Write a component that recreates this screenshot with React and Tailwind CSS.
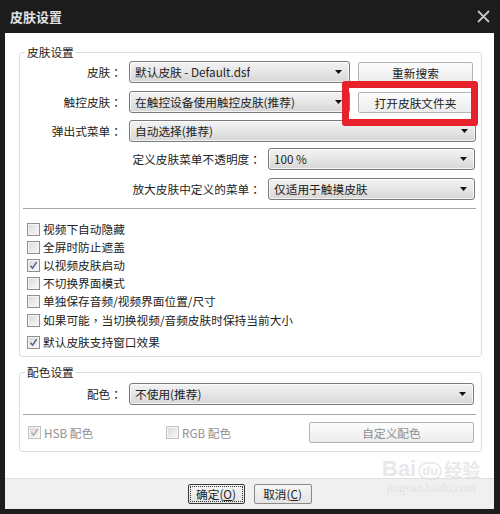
import React from "react";
import clsx from "clsx";

const Arrow = () => (
  <svg width="7" height="4" viewBox="0 0 7 4" className="shrink-0">
    <path d="M0 0h7L3.5 4z" fill="#111" />
  </svg>
);

// centred full-width punctuation, like the YaHei glyphs in the dialog
const P = ({ children }) => <span className="font-['Noto_Sans_CJK_TC',sans-serif]">{children}</span>;

const Select = ({ children, className }) => (
  <div
    className={clsx(
      "flex h-[22px] items-center justify-between rounded-[3px] border border-[#7a7a7a] bg-linear-to-b from-[#f3f3f3] via-[#e6e6e6] to-[#d6d6d6] pl-[5px] pr-[7px] shadow-[inset_0_0_0_1px_rgba(255,255,255,0.7)]",
      className
    )}
  >
    <span className="truncate leading-[20px]">{children}</span>
    <Arrow />
  </div>
);

const Button = ({ children, className, disabled }) => (
  <div
    className={clsx(
      "flex h-[21px] items-center justify-center rounded-[2px] border border-[#b2b2b2] bg-linear-to-b from-[#fdfdfd] to-[#ececec] leading-[19px]",
      disabled && "text-[#8f8f8f]",
      className
    )}
  >
    {children}
  </div>
);

const Checkbox = ({ checked, disabled }) => (
  <span
    className={clsx(
      "flex h-[13px] w-[13px] shrink-0 items-center justify-center border bg-linear-to-br from-[#d8d8d8] to-[#fafafa] shadow-[inset_0_0_0_1px_#f4f4f4]",
      disabled ? "border-[#c2c2c2]" : "border-[#8e8f8f]"
    )}
  >
    {checked && (
      <svg width="9" height="9" viewBox="0 0 9 9">
        <path
          d="M1.5 4.8 L3.6 7.2 L7.6 1.2"
          fill="none"
          stroke={disabled ? "#a8a8a8" : "#4a5a8a"}
          strokeWidth="1.4"
        />
      </svg>
    )}
  </span>
);

const CheckRow = ({ checked, children, className }) => (
  <div className={clsx("ml-[7px] flex h-[18px] items-center gap-[3px]", className)}>
    <Checkbox checked={checked} />
    <span className="whitespace-nowrap leading-[18px]">{children}</span>
  </div>
);

const Legend = ({ children }) => (
  <span className="-mt-[9px] ml-[5px] w-fit bg-white px-[2px] leading-[16px]">{children}</span>
);

const Label = ({ children, className }) => (
  <span className={clsx("text-right", className)}>
    {children}
    <P>：</P>
  </span>
);

export default function App() {
  return (
    <div className="relative flex h-[514px] w-[500px] flex-col bg-[#1c1c1c] font-['Noto_Sans_CJK_SC','Microsoft_YaHei',sans-serif] text-[11.7px] text-[#222]">
      {/* title bar */}
      <div className="flex h-[33px] shrink-0 items-center justify-between pl-[10px] pr-[10px]">
        <span className="text-[13px] font-bold text-[#e2e2e2]">皮肤设置</span>
        <svg width="13" height="13" viewBox="0 0 13 13">
          <path d="M1 1 L12 12 M12 1 L1 12" stroke="#c4c4c4" strokeWidth="1.8" />
        </svg>
      </div>

      <div className="ml-[5px] mr-[6px] flex h-[476px] flex-col">
        <div className="flex flex-1 flex-col bg-white pl-[14px] pr-[12px]">
          {/* group: 皮肤设置 */}
          <div className="mt-[19px] flex flex-col rounded-[3px] border border-[#d5dfe5] pb-[5px]">
            <Legend>皮肤设置</Legend>

            <div className="mt-[1px] flex items-center">
              <Label className="w-[102px]">皮肤</Label>
              <Select className="ml-[7px] w-[221px]">默认皮肤 - Default.dsf</Select>
              <Button className="ml-[8px] w-[115px]">重新搜索</Button>
            </div>

            <div className="mt-[8px] flex items-center">
              <Label className="w-[102px]">触控皮肤</Label>
              <Select className="ml-[7px] w-[221px]">在触控设备使用触控皮肤(推荐)</Select>
              <Button className="ml-[8px] w-[115px]">打开皮肤文件夹</Button>
            </div>

            <div className="mt-[7px] flex items-center">
              <Label className="w-[102px]">弹出式菜单</Label>
              <Select className="ml-[7px] w-[347px]">自动选择(推荐)</Select>
            </div>

            <div className="mt-[6px] flex items-center">
              <Label className="w-[241px]">定义皮肤菜单不透明度</Label>
              <Select className="ml-[7px] w-[207px]">100 %</Select>
            </div>

            <div className="mt-[8px] flex items-center">
              <Label className="w-[241px]">放大皮肤中定义的菜单</Label>
              <Select className="ml-[7px] w-[207px]">仅适用于触摸皮肤</Select>
            </div>

            <div className="ml-[3px] mr-[5px] mt-[8px] border-t border-[#a6a6a6]" />

            <CheckRow className="mt-[11px]">视频下自动隐藏</CheckRow>
            <CheckRow>全屏时防止遮盖</CheckRow>
            <CheckRow checked>以视频皮肤启动</CheckRow>
            <CheckRow>不切换界面模式</CheckRow>
            <CheckRow>单独保存音频/视频界面位置/尺寸</CheckRow>
            <CheckRow className="mt-[1px]">
              如果可能<P>，</P>当切换视频/音频皮肤时保持当前大小
            </CheckRow>
            <CheckRow checked className="mt-[4px]">默认皮肤支持窗口效果</CheckRow>
          </div>

          {/* group: 配色设置 */}
          <div className="mt-[15px] flex flex-col rounded-[3px] border border-[#d5dfe5] pb-[8px]">
            <Legend>配色设置</Legend>

            <div className="mt-[3px] flex items-center">
              <Label className="w-[102px]">配色</Label>
              <Select className="ml-[7px] w-[345px]">不使用(推荐)</Select>
            </div>

            <div className="ml-[3px] mr-[5px] mt-[9px] border-t border-[#a6a6a6]" />

            <div className="mt-[7px] flex items-center text-[#8f8f8f]">
              <div className="ml-[8px] flex w-[138px] items-center gap-[3px]">
                <Checkbox checked disabled />
                <span>HSB 配色</span>
              </div>
              <div className="flex w-[143px] items-center gap-[3px]">
                <Checkbox disabled />
                <span>RGB 配色</span>
              </div>
              <Button disabled className="w-[165px]">自定义配色</Button>
            </div>
          </div>
        </div>

        {/* footer */}
        <div className="flex h-[31px] shrink-0 justify-center gap-[9px] border-t border-[#dfdfdf] bg-[#f0f0f0] pt-[5px]">
          <div className="flex h-[20px] w-[57px] items-center justify-center rounded-[2px] border border-[#3a3a3a] bg-linear-to-b from-[#f6f6f6] to-[#e4e4e4] p-[1px]">
            <span className="flex h-full w-full items-center justify-center border border-dotted border-[#333] leading-[16px]">
              确定(<span className="underline">O</span>)
            </span>
          </div>
          <div className="flex h-[20px] w-[58px] items-center justify-center rounded-[2px] border border-[#8a8a8a] bg-linear-to-b from-[#f6f6f6] to-[#e4e4e4] leading-[18px]">
            取消(<span className="underline">C</span>)
          </div>
        </div>
      </div>

      {/* red highlight */}
      <div className="absolute left-[342px] top-[81px] h-[45px] w-[136px] rounded-[3px] border-[7px] border-[#e8222b]" />

      {/* watermark */}
      <div className="pointer-events-none absolute left-[382px] top-[458px] flex flex-col items-center text-[#d9d9d9] opacity-60">
        <div className="flex items-end gap-[2px] font-['Liberation_Sans',sans-serif] text-[22px] font-bold leading-[22px]">
          <span>Bai</span>
          <span className="rounded-full border-2 border-[#dedede] px-[2px] text-[13px] leading-[14px]">du</span>
          <span className="font-['Noto_Sans_CJK_SC',sans-serif] text-[18px]">经验</span>
        </div>
        <span className="font-['Liberation_Serif',serif] text-[12px] leading-[16px]">jingyan.baidu.com</span>
      </div>
    </div>
  );
}
